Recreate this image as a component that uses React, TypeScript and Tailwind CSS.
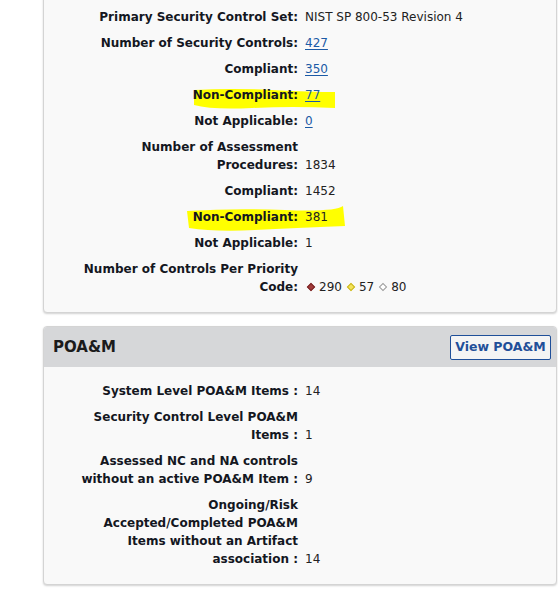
import React from "react";

type Row = { label: React.ReactNode; value: React.ReactNode; hl?: boolean };

const Link = ({ children }: { children: React.ReactNode }) => (
  <a href="#" className="text-[#1b5aa6] underline underline-offset-2">
    {children}
  </a>
);

const Diamond = ({ cls }: { cls: string }) => (
  <span className={`inline-block w-[6px] h-[6px] rotate-45 border ${cls} mr-[5px] ml-[3px] align-[1px]`} />
);

function Rows({ rows, sep }: { rows: Row[]; sep: string }) {
  return (
    <div className="flex flex-col gap-[8px]">
      {rows.map((r, i) => (
        <div key={i} className="flex items-end leading-[18px]">
          <div className="w-[254px] shrink-0 text-right font-bold text-[#14171f]">
            {r.label}
            {sep}
          </div>
          <div className="pl-[7px] text-[#222]">{r.value}</div>
        </div>
      ))}
    </div>
  );
}

export default function App() {
  const rows1: Row[] = [
    { label: "Primary Security Control Set", value: "NIST SP 800-53 Revision 4" },
    { label: "Number of Security Controls", value: <Link>427</Link> },
    { label: "Compliant", value: <Link>350</Link> },
    { label: "Non-Compliant", value: <Link>77</Link> },
    { label: "Not Applicable", value: <Link>0</Link> },
    { label: <>Number of Assessment<br />Procedures</>, value: "1834" },
    { label: "Compliant", value: "1452" },
    { label: "Non-Compliant", value: "381" },
    { label: "Not Applicable", value: "1" },
    {
      label: <>Number of Controls Per Priority<br />Code</>,
      value: (
        <span className="flex items-center">
          <Diamond cls="bg-[#a23b3b] border-[#7a2626] ml-[2px]" />
          290
          <Diamond cls="bg-[#f3e35a] border-[#c9b520] ml-[6px]" />
          57
          <Diamond cls="bg-white border-[#9a9a9a] ml-[6px]" />
          80
        </span>
      ),
    },
  ];
  const rows2: Row[] = [
    { label: "System Level POA&M Items ", value: "14" },
    { label: <>Security Control Level POA&amp;M<br />Items </>, value: "1" },
    { label: <>Assessed NC and NA controls<br />without an active POA&amp;M Item </>, value: "9" },
    {
      label: <>Ongoing/Risk<br />Accepted/Completed POA&amp;M<br />Items without an Artifact<br />association </>,
      value: "14",
    },
  ];

  return (
    <div
      className="w-[558px] h-[593px] overflow-hidden bg-white pl-[43px] pr-[1px] text-[12px]"
      style={{ fontFamily: '"DejaVu Sans", Verdana, sans-serif' }}
    >
      <div className="relative mt-[-20px] rounded-[4px] border border-[#d4d4d4] bg-[#f9f9f9] pt-[27px] pb-[16px] shadow-[0_1px_2px_rgba(0,0,0,0.18)]">
        <svg
          className="absolute left-[148px] top-[105px] pointer-events-none"
          width="145"
          height="24"
          viewBox="0 0 145 24"
        >
          <path d="M2 4 Q40 2 80 4 T143 6 L143 22 Q100 20 60 22 T2 19 Z" fill="#ffff00" />
        </svg>
        <svg
          className="absolute left-[141px] top-[223px] pointer-events-none"
          width="162"
          height="28"
          viewBox="0 0 162 28"
        >
          <path d="M2 7 Q50 4 100 6 T158 2 L160 22 Q110 24 70 26 T4 24 Z" fill="#ffff00" />
        </svg>
        <div className="relative">
          <Rows rows={rows1} sep=":" />
        </div>
      </div>

      <div className="mt-[13px] rounded-[4px] border border-[#d4d4d4] bg-[#f9f9f9] shadow-[0_1px_2px_rgba(0,0,0,0.18)] overflow-hidden">
        <div className="flex items-center justify-between bg-[#d6d7d9] h-[40px] pl-[9px] pr-[5px]">
          <span className="text-[15px] font-bold text-[#1b1b1b]">POA&amp;M</span>
          <button className="h-[25px] w-[101px] rounded-[2px] border border-[#1f4f99] bg-[#f4f4f4] text-[12.5px] font-bold text-[#1f4f99]">
            View POA&amp;M
          </button>
        </div>
        <div className="pt-[15px] pb-[16px]">
          <Rows rows={rows2} sep=":" />
        </div>
      </div>
    </div>
  );
}
